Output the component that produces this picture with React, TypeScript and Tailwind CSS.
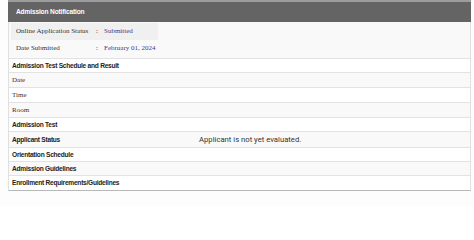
import React from "react";

const SANS = "font-['Liberation_Sans',Arial,sans-serif]";
const SERIF = "font-['Liberation_Serif','Times_New_Roman',serif]";
const BOLD = `text-[6.6px] font-bold tracking-[-0.25px] text-[#222] ${SANS}`;

function BoldRow({ label, bg }: { label: string; bg: string }) {
  return (
    <div className={`flex h-[14px] items-center border-b border-[#e2e2e2] pl-[3px] ${bg}`}>
      <span className={BOLD}>{label}</span>
    </div>
  );
}

function SerifRow({ label, bg }: { label: string; bg: string }) {
  return (
    <div className={`flex h-[15px] items-center border-b border-[#e2e2e2] pl-[3px] ${bg}`}>
      <span className={`text-[7px] text-[#333] ${SERIF}`}>{label}</span>
    </div>
  );
}

export default function App() {
  return (
    <div className="h-[207px] w-[474px] overflow-hidden bg-[#fdfdfd] pl-[8px] pr-[3px]">
      <div className="flex h-[22px] items-center border-t-2 border-[#9c9c9c] bg-[#646464] pl-[8px]">
        <span className={`text-[6.6px] font-bold tracking-[-0.15px] text-white ${SANS}`}>Admission Notification</span>
      </div>
      <div className="border-x border-b border-[#b8b8b8] border-x-[#e0e0e0]">
        <div className="border-b border-[#e2e2e2] bg-[#f9f9f9] px-[2px] py-[1px]">
          <div className={`w-[147px] text-[7px] text-[#333] ${SERIF}`}>
            <div className="flex h-[17px] items-center bg-[#f0f0f0] pl-[5px]">
              <span className="w-[74px]">Online Application Status</span>
              <span className="w-[14px] text-center">:</span>
              <span className="text-[#3b3b8c]">Submitted</span>
            </div>
            <div className="flex h-[17px] items-center pl-[5px]">
              <span className="w-[74px]">Date Submitted</span>
              <span className="w-[14px] text-center">:</span>
              <span className="text-[#3b3b8c]">February 01, 2024</span>
            </div>
          </div>
        </div>
        <BoldRow label="Admission Test Schedule and Result" bg="bg-white" />
        <SerifRow label="Date" bg="bg-[#f9f9f9]" />
        <SerifRow label="Time" bg="bg-white" />
        <SerifRow label="Room" bg="bg-[#f9f9f9]" />
        <BoldRow label="Admission Test" bg="bg-white" />
        <div className="flex h-[16px] items-center border-b border-[#e2e2e2] bg-[#f9f9f9] pl-[3px]">
          <span className={`w-[187px] ${BOLD}`}>Applicant Status</span>
          <span className="text-[7.7px] text-[#333] font-['Roboto','Liberation_Sans',sans-serif]">
            Applicant is not yet evaluated.
          </span>
        </div>
        <BoldRow label="Orientation Schedule" bg="bg-white" />
        <BoldRow label="Admission Guidelines" bg="bg-[#f9f9f9]" />
        <div className="flex h-[14px] items-center bg-white pl-[3px]">
          <span className={BOLD}>Enrollment Requirements/Guidelines</span>
        </div>
      </div>
    </div>
  );
}
